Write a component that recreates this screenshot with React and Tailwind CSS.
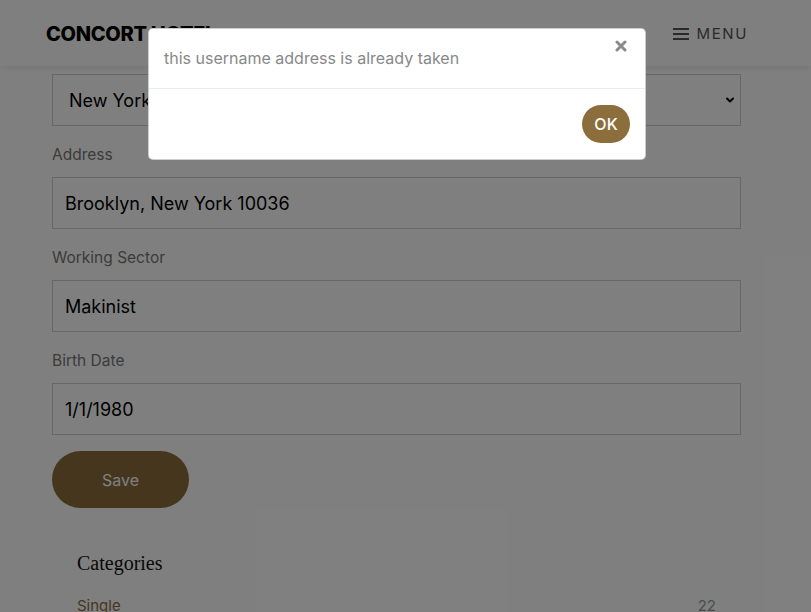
import { ChevronDown } from 'lucide-react';

const font = "font-['Inter','Open_Sans',sans-serif]";

const Field = ({ label, value }) => (
  <div className="mt-[18px]">
    <label className="block text-[15.5px] leading-[22px] text-[#777] mb-[11px]">{label}</label>
    <div className="h-[52px] border border-[#cfcfcf] flex items-center px-[12px] text-[18px] text-black">{value}</div>
  </div>
);

const App = () => {
  return (
    <div className={`relative w-[811px] h-[612px] overflow-hidden bg-white ${font}`}>
      {/* --- PAGE --- */}
      <header className="h-[66px] flex items-center justify-between pt-[2px] pl-[46px] pr-[63px] bg-white shadow-[0_2px_6px_rgba(0,0,0,0.08)] relative z-10">
        <div className="text-[20px] font-extrabold tracking-[-0.3px] text-black">CONCORT HOTEL</div>
        <div className="flex items-center gap-[8px] text-[#555]">
          <svg width="16" height="14" viewBox="0 0 16 14">
            <rect x="0" y="1" width="16" height="2" fill="#555" />
            <rect x="0" y="6" width="16" height="2" fill="#555" />
            <rect x="0" y="11" width="16" height="2" fill="#555" />
          </svg>
          <span className="text-[15px] tracking-[1.6px]">MENU</span>
        </div>
      </header>

      <main className="pl-[52px] pr-[70px] pt-[8px]">
        <div className="h-[52px] border border-[#cfcfcf] flex items-center justify-between pl-[16px] pr-[4px] text-[18px] text-black">
          <span>New York</span>
          <ChevronDown size={12} strokeWidth={4} className="text-black" />
        </div>
        <Field label="Address" value="Brooklyn, New York 10036" />
        <Field label="Working Sector" value="Makinist" />
        <Field label="Birth Date" value="1/1/1980" />
        <button className="mt-[16px] w-[137px] h-[57px] rounded-full bg-[#8c6d3c] text-white text-[16px]">Save</button>

        <div className="mt-[43px] px-[25px]">
          <h3 className="font-['Liberation_Serif',serif] text-[20px] text-[#111] leading-[24px]">Categories</h3>
          <div className="mt-[20px] flex justify-between text-[15px]">
            <span className="text-[#8c6d3c]">Single</span>
            <span className="text-[#999]">22</span>
          </div>
        </div>
      </main>

      {/* --- MODAL --- */}
      <div className="absolute inset-0 z-20 bg-black/50 flex justify-center pr-[17px] pt-[28px]">
        <div className="w-[498px] h-fit bg-white rounded-[5px] border border-black/20">
          <div className="flex items-start justify-between pl-[15px] pr-[18px] pt-[16px] pb-[16px] border-b border-[#e9ecef]">
            <p className="text-[16px] leading-[27px] text-[#888]">this username address is already taken</p>
            <svg width="12" height="12" viewBox="0 0 12 12" className="-mt-[5px]">
              <path d="M2 2 L10 10 M10 2 L2 10" stroke="#8a8a8a" strokeWidth="3" strokeLinecap="round" />
            </svg>
          </div>
          <div className="flex justify-end px-[15px] py-[16px]">
            <button className="w-[48px] h-[38px] rounded-full bg-[#8c6d3c] text-white text-[16px] font-medium">OK</button>
          </div>
        </div>
      </div>
    </div>
  );
};

export default App;
